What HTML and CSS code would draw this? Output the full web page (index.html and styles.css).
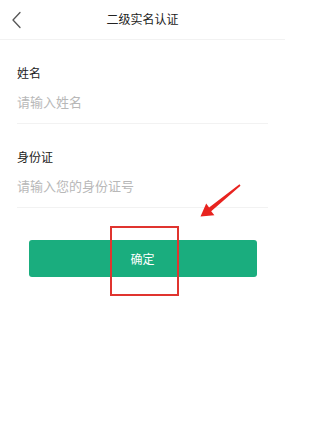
FILE: index.html
```html
<!DOCTYPE html>
<html lang="zh-CN">
<head>
<meta charset="utf-8">
<title>二级实名认证</title>
<link rel="stylesheet" href="styles.css">
</head>
<body>
<div class="page">
  <header class="nav">
    <span class="back" aria-label="返回">
      <svg width="12" height="18" viewBox="0 0 12 18"><path d="M9 1.5 L2 9 L9 16.5" fill="none" stroke="#555" stroke-width="1.3" stroke-linecap="round" stroke-linejoin="round"/></svg>
    </span>
    <h1 class="title">二级实名认证</h1>
  </header>
  <form class="form">
    <label class="field">
      <span class="label">姓名</span>
      <input class="input" type="text" placeholder="请输入姓名">
    </label>
    <label class="field">
      <span class="label">身份证</span>
      <input class="input" type="text" placeholder="请输入您的身份证号">
    </label>
    <div class="actions">
      <button class="submit" type="button">确定</button>
    </div>
  </form>
  <div class="mark-box"></div>
  <svg class="mark-arrow" width="50" height="40" viewBox="195 180 50 40">
    <polygon points="240.5,185.7 211.2,211.3 214.4,215.2 200.5,216.5 206.2,203.6 209.1,207.6 239.5,184.3" fill="#e8231f"/>
  </svg>
</div>
</body>
</html>
```

FILE: styles.css
```css
* { box-sizing: border-box; }
html, body { margin: 0; padding: 0; background: #fff; }
body {
  font-family: "Noto Sans CJK SC", "Noto Sans", sans-serif;
  color: #333;
}
.page { position: relative; width: 285px; min-height: 438px; }
.nav {
  position: relative;
  height: 40px;
  border-bottom: 1px solid #f2f2f2;
  display: flex;
  align-items: center;
  justify-content: center;
}
.back {
  position: absolute;
  left: 11px;
  top: 11px;
  display: flex;
}
.title {
  margin: 0;
  font-size: 12px;
  font-weight: normal;
  line-height: 16px;
  color: #222;
  padding-bottom: 1px;
}
.form { display: flex; flex-direction: column; padding: 0 17px; }
.field {
  display: flex;
  flex-direction: column;
  padding: 25px 0 11px;
  border-bottom: 1px solid #f2f2f2;
}
.label {
  font-size: 12px;
  line-height: 16px;
  color: #222;
}
.input {
  margin-top: 11px;
  border: none;
  outline: none;
  padding: 0;
  height: 20px;
  font: inherit;
  font-size: 13px;
  line-height: 20px;
  color: #333;
  background: transparent;
}
.input::placeholder { color: #b8b8b8; }
.actions { display: flex; padding: 32px 11.5px 0; }
.submit {
  flex: 1;
  height: 37px;
  border: none;
  border-radius: 3px;
  background: #1aad7e;
  color: #fff;
  font: inherit;
  font-size: 12px;
}
.mark-box {
  position: absolute;
  left: 110px;
  top: 226px;
  width: 69px;
  height: 70px;
  border: 2px solid #e0342f;
}
.mark-arrow { position: absolute; left: 195px; top: 180px; }
```
